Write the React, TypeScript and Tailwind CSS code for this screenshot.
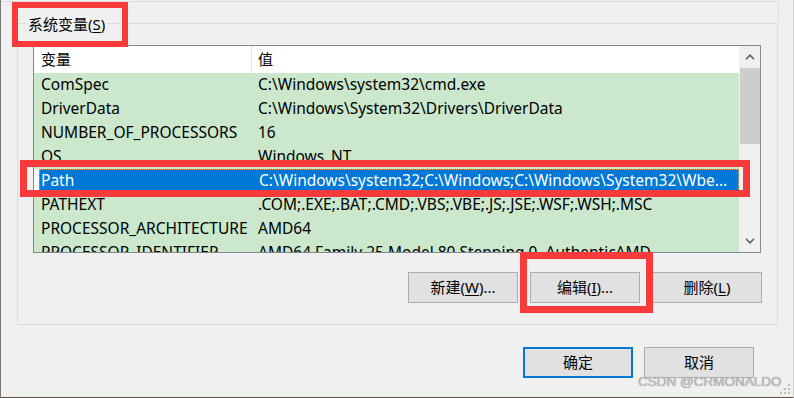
const rows: [string, string][] = [
  ['ComSpec', 'C:\\Windows\\system32\\cmd.exe'],
  ['DriverData', 'C:\\Windows\\System32\\Drivers\\DriverData'],
  ['NUMBER_OF_PROCESSORS', '16'],
  ['OS', 'Windows_NT'],
  ['Path', 'C:\\Windows\\system32;C:\\Windows;C:\\Windows\\System32\\Wbe...'],
  ['PATHEXT', '.COM;.EXE;.BAT;.CMD;.VBS;.VBE;.JS;.JSE;.WSF;.WSH;.MSC'],
  ['PROCESSOR_ARCHITECTURE', 'AMD64'],
  ['PROCESSOR_IDENTIFIER', 'AMD64 Family 25 Model 80 Stepping 0, AuthenticAMD'],
];

function WinButton({ children, primary }: { children: React.ReactNode; primary?: boolean }) {
  return (
    <button
      className={`w-[110px] h-[31px] flex items-center justify-center bg-[#e1e1e1] text-[15px] text-black ${
        primary ? 'border-2 border-[#0078d7]' : 'border border-[#adadad]'
      }`}
    >
      {children}
    </button>
  );
}

export default function App() {
  return (
    <div className="relative w-[794px] h-[398px] bg-[#f0f0f0] overflow-hidden border-l border-l-[#777777] border-b border-b-[#5c5048] border-r border-r-[#cfcfcf] font-['Noto_Sans','Noto_Sans_CJK_SC',sans-serif] text-black">
      {/* bottom edge of the group above */}
      <div className="h-[22px]">
        <div className="mt-[1px] h-[21px] w-[778px] border-t border-r border-[#dcdcdc]" />
      </div>

      {/* 系统变量 group */}
      <div className="ml-[16px] w-[761px] h-[302px] border border-[#dcdcdc] flex flex-col">
        <div className="-mt-[12px] ml-[8px] w-fit px-[2px] h-[24px] leading-[24px] text-[15px] bg-[#f0f0f0]">
          系统变量(<span className="underline underline-offset-2">S</span>)
        </div>

        <div className="mt-[9px] ml-[15px] w-[728px] h-[208px] border border-[#828790] flex bg-white">
          <div className="w-[705px] h-full overflow-hidden text-[15.5px]">
            <div className="grid grid-cols-[218px_1fr] h-[27px] bg-white items-center text-[15px]">
              <div className="pl-[7px] h-full flex items-center border-r border-[#e5e5e5]">变量</div>
              <div className="pl-[6px]">值</div>
            </div>
            {rows.map(([name, value]) =>
              name === 'Path' ? (
                <div key={name} className="h-[24px] bg-white pl-[5px]">
                  <div className="h-full grid grid-cols-[213px_1fr] bg-[#0078d7] text-white border border-dotted border-[#f7a35c] leading-[21px] whitespace-nowrap">
                    <div className="pl-[1px]">{name}</div>
                    <div className="pl-[6px] overflow-hidden">{value}</div>
                  </div>
                </div>
              ) : (
                <div key={name} className="h-[24px] grid grid-cols-[218px_1fr] bg-[#cbe8cd] leading-[22px] whitespace-nowrap">
                  <div className="pl-[7px]">{name}</div>
                  <div className="pl-[6px] overflow-hidden">{value}</div>
                </div>
              )
            )}
          </div>
          <div className="w-[21px] h-full bg-[#f0f0f0] flex flex-col">
            <div className="h-[22px] flex items-center justify-center">
              <svg width="10" height="6" viewBox="0 0 10 6">
                <path d="M1 5.2 L5 1.2 L9 5.2" fill="none" stroke="#606060" strokeWidth="1.6" />
              </svg>
            </div>
            <div className="h-[76px] bg-[#cdcdcd] ml-[1px]" />
            <div className="flex-1" />
            <div className="h-[22px] flex items-center justify-center">
              <svg width="10" height="6" viewBox="0 0 10 6">
                <path d="M1 0.8 L5 4.8 L9 0.8" fill="none" stroke="#606060" strokeWidth="1.6" />
              </svg>
            </div>
          </div>
        </div>

        <div className="mt-[19px] mr-[15px] flex justify-end gap-[12px]">
          <WinButton>
            新建(<span className="underline underline-offset-2">W</span>)...
          </WinButton>
          <WinButton>
            编辑(<span className="underline underline-offset-2">I</span>)...
          </WinButton>
          <WinButton>
            删除(<span className="underline underline-offset-2">L</span>)
          </WinButton>
        </div>
      </div>

      <div className="mt-[22px] mr-[39px] flex justify-end gap-[11px]">
        <WinButton primary>确定</WinButton>
        <WinButton>取消</WinButton>
      </div>

      {/* red annotation boxes */}
      <div className="absolute left-[11px] top-[2px] w-[116px] h-[45px] border-[6px] border-[#f83a3a]" />
      <div className="absolute left-[19px] top-[160px] w-[730px] h-[37px] border-[7px] border-[#f83a3a]" />
      <div className="absolute left-[519px] top-[252px] w-[133px] h-[61px] border-[7px] border-[#f83a3a]" />

      {/* watermark */}
      <div className="absolute left-[637px] top-[373px] text-[13.5px] leading-[18px] font-['Liberation_Sans',sans-serif] text-[#bdbdbd] [text-shadow:0_0_1px_#8a8a8a]">
        CSDN @CRMONALDO
      </div>

      {/* size grip */}
      <svg className="absolute right-[2px] bottom-[2px]" width="12" height="12" viewBox="0 0 12 12">
        <rect x="9" y="1" width="2" height="2" fill="#bdbdbd" />
        <rect x="5" y="5" width="2" height="2" fill="#bdbdbd" />
        <rect x="9" y="5" width="2" height="2" fill="#bdbdbd" />
        <rect x="1" y="9" width="2" height="2" fill="#bdbdbd" />
        <rect x="5" y="9" width="2" height="2" fill="#bdbdbd" />
        <rect x="9" y="9" width="2" height="2" fill="#bdbdbd" />
      </svg>
    </div>
  );
}
